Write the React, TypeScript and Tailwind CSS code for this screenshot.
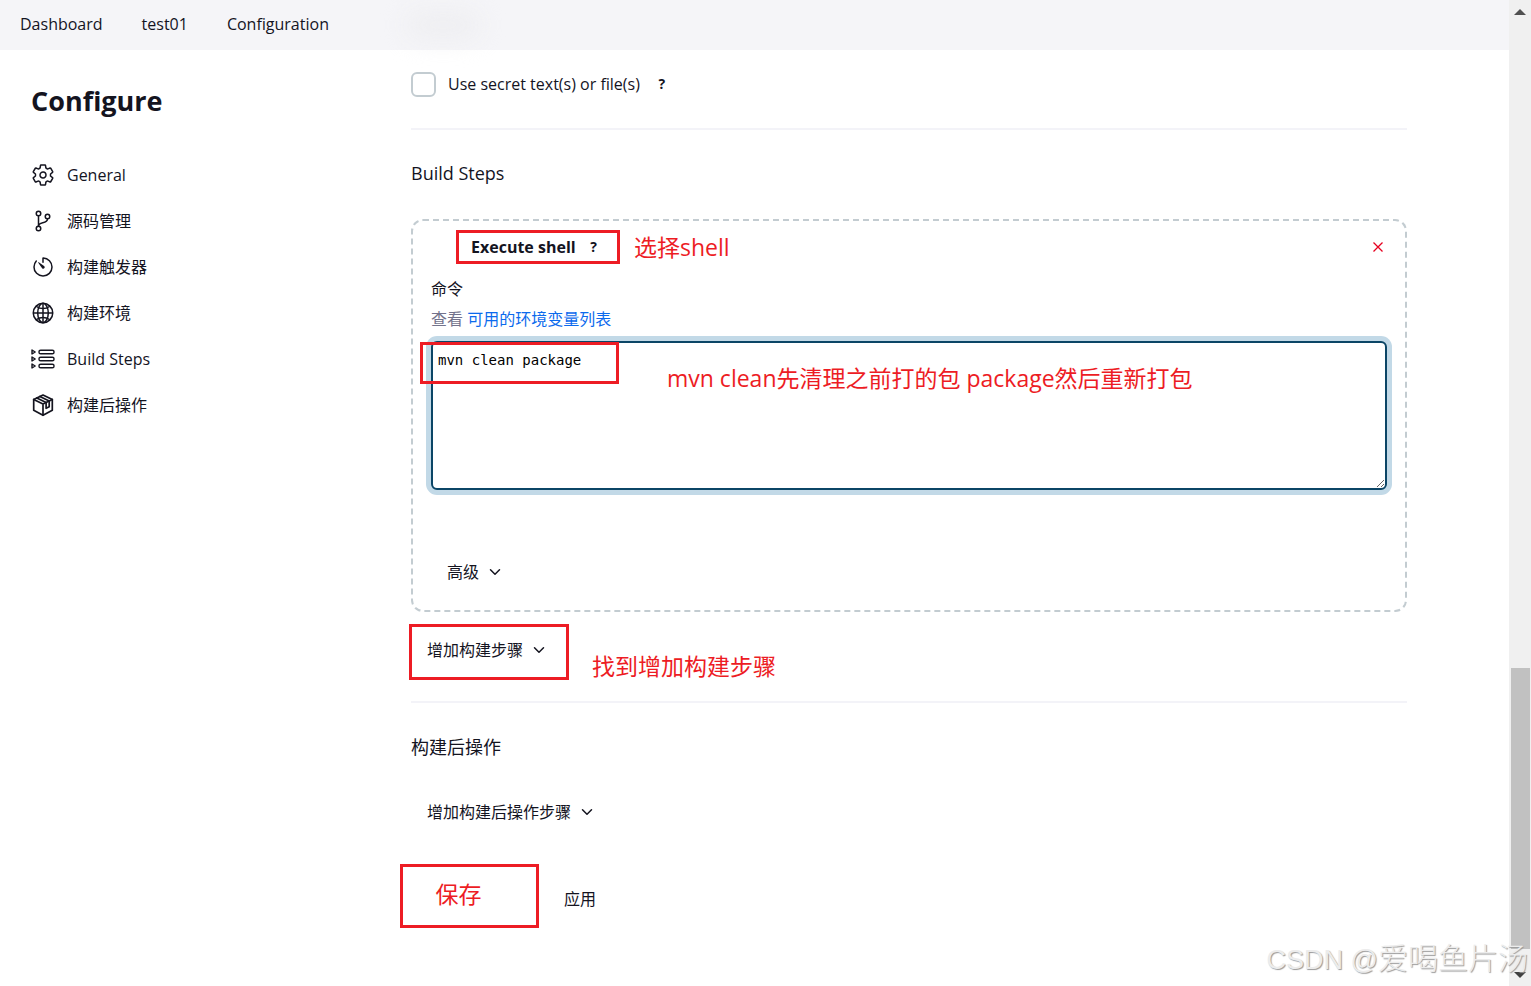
import type { ReactNode } from "react";
import {
  IoChevronDown,
  IoGitBranchOutline,
  IoGlobeOutline,
  IoSettingsOutline,
  IoTimerOutline,
} from "react-icons/io5";

function StepsIcon() {
  return (
    <svg viewBox="0 0 24 24" className="size-6" fill="none" stroke="currentColor" strokeWidth="1.4" strokeLinejoin="round">
      <path d="M1 3l3.200 2L1 7zM1 10l3.200 2L1 14zM1 17l3.200 2L1 21z" />
      <rect x="8" y="3.200" width="15" height="3.600" rx="1.600" />
      <rect x="8" y="10.200" width="15" height="3.600" rx="1.600" />
      <rect x="8" y="17.200" width="15" height="3.600" rx="1.600" />
    </svg>
  );
}

function PackageIcon() {
  return (
    <svg viewBox="0 0 24 24" className="size-6" fill="none" stroke="currentColor" strokeWidth="1.7" strokeLinejoin="round" strokeLinecap="round">
      <path d="M12 2l9.300 4.500v10.800L12 22.300l-9.300-5V6.500z" />
      <path d="M2.700 6.500L12 11l9.300-4.500M12 11v11" />
      <path d="M5.800 5l9.300 4.500v5.800l3.100-1.600V8L8.900 3.500" />
    </svg>
  );
}

const navItems: { label: string; icon: ReactNode }[] = [
  { label: "General", icon: <IoSettingsOutline className="size-6 stroke-[0.5px]" /> },
  { label: "源码管理", icon: <IoGitBranchOutline className="size-6 stroke-[0.5px]" /> },
  { label: "构建触发器", icon: <IoTimerOutline className="size-6 stroke-[0.5px]" /> },
  { label: "构建环境", icon: <IoGlobeOutline className="size-6 stroke-[0.5px]" /> },
  { label: "Build Steps", icon: <StepsIcon /> },
  { label: "构建后操作", icon: <PackageIcon /> },
];

function Help() {
  return (
    <button type="button" className="w-5 text-center text-sm leading-6 font-bold">
      ?
    </button>
  );
}

function MenuButton({ children }: { children: ReactNode }) {
  return (
    <button type="button" className="flex h-10 items-center gap-2 px-4">
      {children}
      <IoChevronDown className="size-4" />
    </button>
  );
}

function Note({ children, className }: { children: ReactNode; className: string }) {
  return (
    <span className={`pointer-events-none absolute text-[23px] leading-8 whitespace-nowrap text-[#ed1c24] ${className}`}>
      {children}
    </span>
  );
}

function Frame({ className }: { className: string }) {
  return <span className={`pointer-events-none absolute border-3 border-[#ed1c24] ${className}`} />;
}

function Scrollbar() {
  return (
    <div className="flex w-[22px] shrink-0 flex-col items-center bg-[#f0f0f0]">
      <svg viewBox="0 0 12 6" className="mt-[9px] h-[6px] w-3 shrink-0 fill-[#505050]">
        <path d="M6 0l6 6H0z" />
      </svg>
      <div className="flex-1" />
      <div className="h-[281px] w-[19px] bg-[#c1c1c1]" />
      <svg viewBox="0 0 12 6" className="mt-[23px] mb-2 h-[6px] w-3 shrink-0 fill-[#404040]">
        <path d="M0 0h12L6 6z" />
      </svg>
    </div>
  );
}

export default function App() {
  return (
    <div className="relative flex min-h-screen bg-white font-['Open_Sans','Noto_Sans_CJK_SC',sans-serif] text-base leading-6 text-[#14141f]">
      <div className="min-w-0 flex-1">
        <header className="flex h-[50px] items-center bg-[#f5f5f8]">
          <nav className="flex gap-[39px] pb-[2px] pl-5">
            <a href="#dashboard">Dashboard</a>
            <a href="#test01">test01</a>
            <a href="#configuration">Configuration</a>
          </nav>
          <div className="ml-[78px] h-7 w-[72px] rounded-full bg-[#eeeef1] blur-md" />
        </header>

        <div className="flex">
          <aside className="w-[411px] shrink-0 px-[31px] pt-8">
            <h1 className="text-[27px] leading-[38px] font-bold">Configure</h1>
            <nav className="mt-8">
              {navItems.map((item) => (
                <a key={item.label} href="#section" className="flex h-[46px] items-center gap-3">
                  {item.icon}
                  {item.label}
                </a>
              ))}
            </nav>
          </aside>

          <main className="min-w-0 flex-1 pt-[22px] pr-[102px]">
            <div className="flex items-start">
              <label className="flex items-start gap-3">
                <input type="checkbox" className="size-[25px] appearance-none rounded-md border-2 border-[#c3ccd1] bg-white" />
                Use secret text(s) or file(s)
              </label>
              <span className="ml-3 flex">
                <Help />
              </span>
            </div>

            <section className="mt-[31px] border-t-2 border-[#f3f3f8] pt-[29px]">
              <h2 className="text-lg leading-7">Build Steps</h2>
              <div className="relative mt-8 rounded-xl border-2 border-dashed border-[#c3ccd1] px-[18px] pt-[14px] pb-[18px]">
                <div className="flex items-center justify-between pl-10">
                  <div className="flex items-center gap-2">
                    <strong className="font-bold">Execute shell</strong>
                    <Help />
                  </div>
                  <button type="button" aria-label="删除" className="flex size-[18px] items-center justify-center text-[#e6001f]">
                    <svg viewBox="0 0 10 10" className="size-[10px]" stroke="currentColor" strokeWidth="1.3">
                      <path d="M.5.5l9 9M9.500.5l-9 9" />
                    </svg>
                  </button>
                </div>
                <label htmlFor="command" className="mt-[18px] block">
                  命令
                </label>
                <p className="mt-[6px] text-[#73738c]">
                  查看 <a href="#env" className="text-[#0b6aed]">可用的环境变量列表</a>
                </p>
                <textarea
                  id="command"
                  defaultValue="mvn clean package"
                  className="mt-[10px] block h-[149px] w-full rounded-md border-2 border-[#0b4566] bg-white px-[5px] py-[7px] font-['DejaVu_Sans_Mono','Liberation_Mono',monospace] text-sm leading-5 text-black ring-5 ring-[#c2d9e7] outline-none"
                />
                <div className="mt-[62px]">
                  <MenuButton>高级</MenuButton>
                </div>
                <Frame className="top-[9px] left-[43px] h-[34px] w-[164px]" />
                <Note className="top-[10px] left-[221px]">选择shell</Note>
                <Frame className="top-[121px] left-[7px] h-[42px] w-[199px]" />
                <Note className="top-[141px] left-[254px]">mvn clean先清理之前打的包 package然后重新打包</Note>
              </div>
              <div className="relative mt-[18px] flex">
                <MenuButton>增加构建步骤</MenuButton>
                <Frame className="-top-[6px] -left-[2px] h-14 w-40" />
                <Note className="top-5 left-[181px]">找到增加构建步骤</Note>
              </div>
            </section>

            <section className="mt-[31px] border-t-2 border-[#f3f3f8] pt-[30px]">
              <h2 className="text-lg leading-7">构建后操作</h2>
              <div className="mt-[31px]">
                <MenuButton>增加构建后操作步骤</MenuButton>
              </div>
            </section>

            <div className="mt-8 -ml-[11px] flex items-center gap-[9px]">
              <button type="button" className="h-16 w-[139px] border-3 border-[#ed1c24] pr-[22px] pb-1 text-[23px] leading-8 text-[#ed1c24]">
                保存
              </button>
              <button type="button" className="mt-[6px] h-10 px-4">
                应用
              </button>
            </div>
          </main>
        </div>
      </div>
      <Scrollbar />
      <span className="pointer-events-none absolute right-[3px] bottom-1 flex items-baseline font-['Liberation_Sans','Noto_Sans_CJK_SC',sans-serif] text-[27px] leading-[44px] whitespace-pre text-[#ececec] [text-shadow:1px_1px_1px_#999]">
        CSDN @<span className="text-[30px] font-light">爱喝鱼片汤</span>
      </span>
    </div>
  );
}
